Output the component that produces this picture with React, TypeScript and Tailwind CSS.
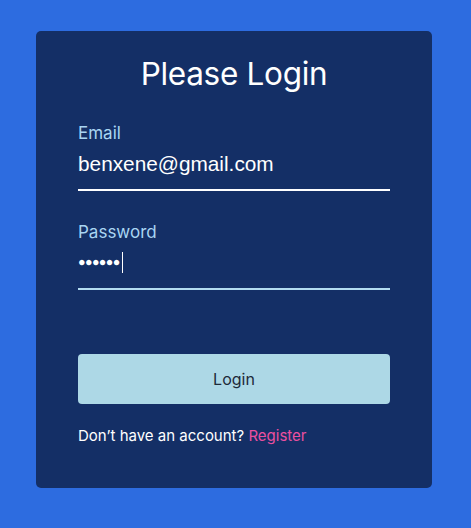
import React from 'react';

export default function App() {
  return (
    <div className="min-h-[528px] w-full bg-[#2d6ce0] pl-[36px] pt-[31px] font-['Inter',sans-serif]">
      <div className="w-[396px] h-[457px] bg-[#142f66] rounded-[5px] px-[42px] pt-[23px]">
        <h1 className="text-center text-white text-[31.5px] leading-[40px] tracking-[-0.3px]">Please Login</h1>

        <form className="mt-[28px]" onSubmit={(e) => e.preventDefault()}>
          <label className="block text-[#a9d5f2] text-[17px] leading-[22px]">Email</label>
          <input
            type="email"
            defaultValue="benxene@gmail.com"
            className="block w-full bg-transparent text-white text-[20.8px] leading-[28px] font-['Liberation_Sans',sans-serif] pt-[6px] pb-[11px] border-b-2 border-white outline-none"
          />

          <label className="block mt-[30px] text-[#a9d5f2] text-[17px] leading-[22px]">Password</label>
          <div className="flex items-center h-[47px] pb-[7px] border-b-2 border-[#b3dcf0]">
            <span className="text-white text-[12.5px] tracking-[-0.6px] leading-none font-['Liberation_Sans',sans-serif]">●●●●●●</span>
            <span className="ml-[2px] w-px h-[21px] bg-white" />
          </div>

          <button
            type="submit"
            className="mt-[64px] w-full h-[50px] rounded-[4px] bg-[#add8e6] text-[#1d2a3a] text-[16px]"
          >
            Login
          </button>
        </form>

        <p className="mt-[22px] text-white text-[15px] leading-[20px]">
          Don’t have an account? <a href="#" className="text-[#ec4fa0]">Register</a>
        </p>
      </div>
    </div>
  );
}
